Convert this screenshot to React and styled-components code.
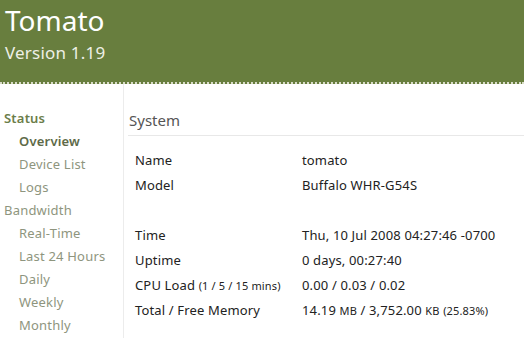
import React from "react";
import styled, { createGlobalStyle } from "styled-components";

const Global = createGlobalStyle`
  html, body { margin: 0; padding: 0; background: #fff; }
  body { font-family: "Noto Sans", "Noto Sans CJK JP", sans-serif; }
`;

const Page = styled.div`
  width: 524px;
  height: 338px;
  overflow: hidden;
  display: flex;
  flex-direction: column;
`;

const Header = styled.header`
  background: #687e3e;
  height: 84px;
  box-sizing: border-box;
  padding: 1px 0 0 5px;
  color: #fff;
  border-bottom: 2px dotted #d9dcc8;
  flex-shrink: 0;
`;

const Title = styled.h1`
  margin: 0;
  font-size: 28px;
  line-height: 38px;
  font-weight: 400;
`;

const Version = styled.div`
  font-size: 17px;
  line-height: 22px;
  padding-top: 3px;
  letter-spacing: 0.2px;
  color: #eef0e6;
`;

const Body = styled.div`
  display: flex;
  flex: 1;
`;

const Sidebar = styled.nav`
  width: 124px;
  box-sizing: border-box;
  border-right: 1px solid #ececec;
  padding-top: 23px;
  display: flex;
  flex-direction: column;
`;

const NavItem = styled.div`
  font-size: 13px;
  line-height: 23px;
  letter-spacing: 0.2px;
  padding-left: ${(p) => (p.$sub ? 19 : 4)}px;
  color: ${(p) => (p.$section ? "#6b7d49" : p.$active ? "#5e6a48" : "#8e957e")};
  font-weight: ${(p) => (p.$section || p.$active ? 600 : 400)};
`;

const Content = styled.main`
  flex: 1;
  padding: 26px 0 0 4px;
`;

const SectionTitle = styled.h2`
  margin: 0;
  font-size: 15px;
  line-height: 20px;
  font-weight: 400;
  color: #555;
  padding: 0 0 5px 1px;
  border-bottom: 1px solid #e8e8e8;
`;

const Table = styled.div`
  display: grid;
  grid-template-columns: 167px 1fr;
  padding: 11px 0 0 7px;
  grid-auto-rows: 25px;
  align-items: center;
  color: #222;
  font-size: 13px;
  letter-spacing: 0.15px;
`;

const Spacer = styled.div`
  grid-column: 1 / -1;
`;

const Small = styled.span`
  font-size: 11px;
`;

const nav = [
  { t: "Status", section: true },
  { t: "Overview", sub: true, active: true },
  { t: "Device List", sub: true },
  { t: "Logs", sub: true },
  { t: "Bandwidth" },
  { t: "Real-Time", sub: true },
  { t: "Last 24 Hours", sub: true },
  { t: "Daily", sub: true },
  { t: "Weekly", sub: true },
  { t: "Monthly", sub: true },
];

export default function App() {
  return (
    <Page>
      <Global />
      <Header>
        <Title>Tomato</Title>
        <Version>Version 1.19</Version>
      </Header>
      <Body>
        <Sidebar>
          {nav.map((n) => (
            <NavItem key={n.t} $sub={n.sub} $section={n.section} $active={n.active}>
              {n.t}
            </NavItem>
          ))}
        </Sidebar>
        <Content>
          <SectionTitle>System</SectionTitle>
          <Table>
            <div>Name</div>
            <div>tomato</div>
            <div>Model</div>
            <div>Buffalo WHR-G54S</div>
            <Spacer />
            <div>Time</div>
            <div>Thu, 10 Jul 2008 04:27:46 -0700</div>
            <div>Uptime</div>
            <div>0 days, 00:27:40</div>
            <div>
              CPU Load <Small>(1 / 5 / 15 mins)</Small>
            </div>
            <div>0.00 / 0.03 / 0.02</div>
            <div>Total / Free Memory</div>
            <div>
              14.19 <Small>MB</Small> / 3,752.00 <Small>KB</Small> <Small>(25.83%)</Small>
            </div>
          </Table>
        </Content>
      </Body>
    </Page>
  );
}
